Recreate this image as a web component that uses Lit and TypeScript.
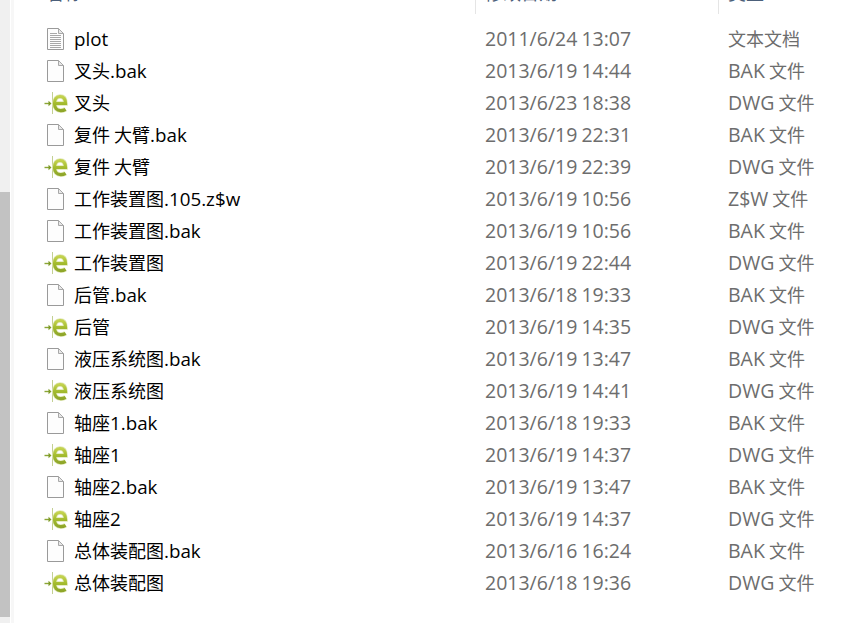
import { LitElement, html, css, svg } from "lit";
import { customElement } from "lit/decorators.js";

type Row = [string, string, string, string];
const rows: Row[] = [
  ["t", "plot", "2011/6/24 13:07", "文本文档"],
  ["b", "叉头.bak", "2013/6/19 14:44", "BAK 文件"],
  ["e", "叉头", "2013/6/23 18:38", "DWG 文件"],
  ["b", "复件 大臂.bak", "2013/6/19 22:31", "BAK 文件"],
  ["e", "复件 大臂", "2013/6/19 22:39", "DWG 文件"],
  ["b", "工作装置图.105.z$w", "2013/6/19 10:56", "Z$W 文件"],
  ["b", "工作装置图.bak", "2013/6/19 10:56", "BAK 文件"],
  ["e", "工作装置图", "2013/6/19 22:44", "DWG 文件"],
  ["b", "后管.bak", "2013/6/18 19:33", "BAK 文件"],
  ["e", "后管", "2013/6/19 14:35", "DWG 文件"],
  ["b", "液压系统图.bak", "2013/6/19 13:47", "BAK 文件"],
  ["e", "液压系统图", "2013/6/19 14:41", "DWG 文件"],
  ["b", "轴座1.bak", "2013/6/18 19:33", "BAK 文件"],
  ["e", "轴座1", "2013/6/19 14:37", "DWG 文件"],
  ["b", "轴座2.bak", "2013/6/19 13:47", "BAK 文件"],
  ["e", "轴座2", "2013/6/19 14:37", "DWG 文件"],
  ["b", "总体装配图.bak", "2013/6/16 16:24", "BAK 文件"],
  ["e", "总体装配图", "2013/6/18 19:36", "DWG 文件"],
];

const mixed = (s: string) =>
  s.split(/([\x21-\x7e]+)/).map((p, i) => (i % 2 ? html`<span class="lat">${p}</span>` : p));

const page = (lines: boolean) => svg`<svg class="ico" width="24" height="24" viewBox="0 0 24 24">
  <path d="M3.5 0.5H14.5L19.5 5.5V21.5H3.5Z" fill="#fdfdfd" stroke="#9a9a9a"/>
  <path d="M14.5 0.5V5.5H19.5Z" fill="#e8e8e8" stroke="#a8a8a8"/>
  ${lines ? [5, 7, 9, 11, 13, 15, 17, 19].map((y) => svg`<path d=${`M6 ${y + 0.5}H${y < 7 ? 13 : 17}`} stroke="#a8a8a8"/>`) : ""}
</svg>`;

const E = "M11 11.5H21.5C21.5 7 19.5 4.5 16 4.5C12.5 4.5 10.5 7.5 10.5 11.5C10.5 16 13 18.7 16.8 18.7C18.6 18.7 20.2 18.2 21.6 17.3";
const ecad = svg`<svg class="ico" width="24" height="24" viewBox="0 0 24 24">
  <defs><linearGradient id="eg" x1="0" y1="0" x2="0" y2="1">
    <stop offset="0" stop-color="#c3d24e"/><stop offset="0.5" stop-color="#a3bb2e"/><stop offset="1" stop-color="#8fa62a"/>
  </linearGradient></defs>
  <path d="M8.5 0V22" stroke="#c3d092" stroke-width="1"/>
  <path d="M0.5 11.5H5" stroke="#8aa536" stroke-width="1.4"/>
  <path d="M4.5 8.8L7.5 11.5L4.5 14.2Z" fill="#7d9a25"/>
  <path d=${E} fill="none" stroke="#dfe7b4" stroke-width="4.6"/>
  <path d=${E} fill="none" stroke="url(#eg)" stroke-width="3.2"/>
</svg>`;

@customElement("app-root")
export class AppRoot extends LitElement {
  static styles = css`
    :host {
      display: block;
      width: 847px;
      height: 623px;
      overflow: hidden;
      background: #fff;
      font-family: "Noto Sans CJK SC", "Noto Sans", sans-serif;
      font-size: 18px;
    }
    .win { display: flex; height: 623px; }
    .track {
      width: 10px;
      background: #f0f0f0;
      padding-top: 192px;
      flex: none;
      display: flex;
    }
    .thumb { width: 10px; height: 425px; background: #c2c2c2; }
    .gap { width: 1px; flex: none; background: #fff; }
    .gutter { width: 3px; flex: none; background: #f7f7f7; }
    .main { flex: 1; min-width: 0; }
    .head {
      height: 14px;
      display: grid;
      grid-template-columns: 461px 243px 1fr;
      overflow: hidden;
      color: #4c607a;
    }
    .hc { padding-left: 32px; height: 14px; overflow: hidden; line-height: 24px; }
    .hc > span { display: block; margin-top: -20px; }
    .hc + .hc { border-left: 1px solid #e5e5e5; padding-left: 9px; }
    .list { padding-top: 8px; }
    .row {
      height: 32px;
      display: grid;
      grid-template-columns: 30px 411px 243px 1fr;
      padding-left: 30px;
      align-items: center;
      line-height: 32px;
      white-space: pre;
    }
    .ico { display: block; margin-top: 4px; }
    .name { color: #000; }
    .dim { color: #6d6d6d; }
    .lat { font-family: "Open Sans", "Noto Sans", sans-serif; font-size: 19.5px; line-height: 0; }
    .name .lat { font-size: 18.8px; }
  `;

  render() {
    return html`<div class="win">
      <div class="track"><div class="thumb"></div></div>
      <div class="gap"></div>
      <div class="gutter"></div>
      <div class="main">
        <div class="head">
          <div class="hc"><span>名称</span></div>
          <div class="hc"><span>修改日期</span></div>
          <div class="hc"><span>类型</span></div>
        </div>
        <div class="list">
          ${rows.map(
            ([k, n, d, t]) => html`<div class="row">
              ${k === "e" ? ecad : page(k === "t")}
              <span class="name">${mixed(n)}</span>
              <span class="dim">${mixed(d)}</span>
              <span class="dim">${mixed(t)}</span>
            </div>`
          )}
        </div>
      </div>
    </div>`;
  }
}
